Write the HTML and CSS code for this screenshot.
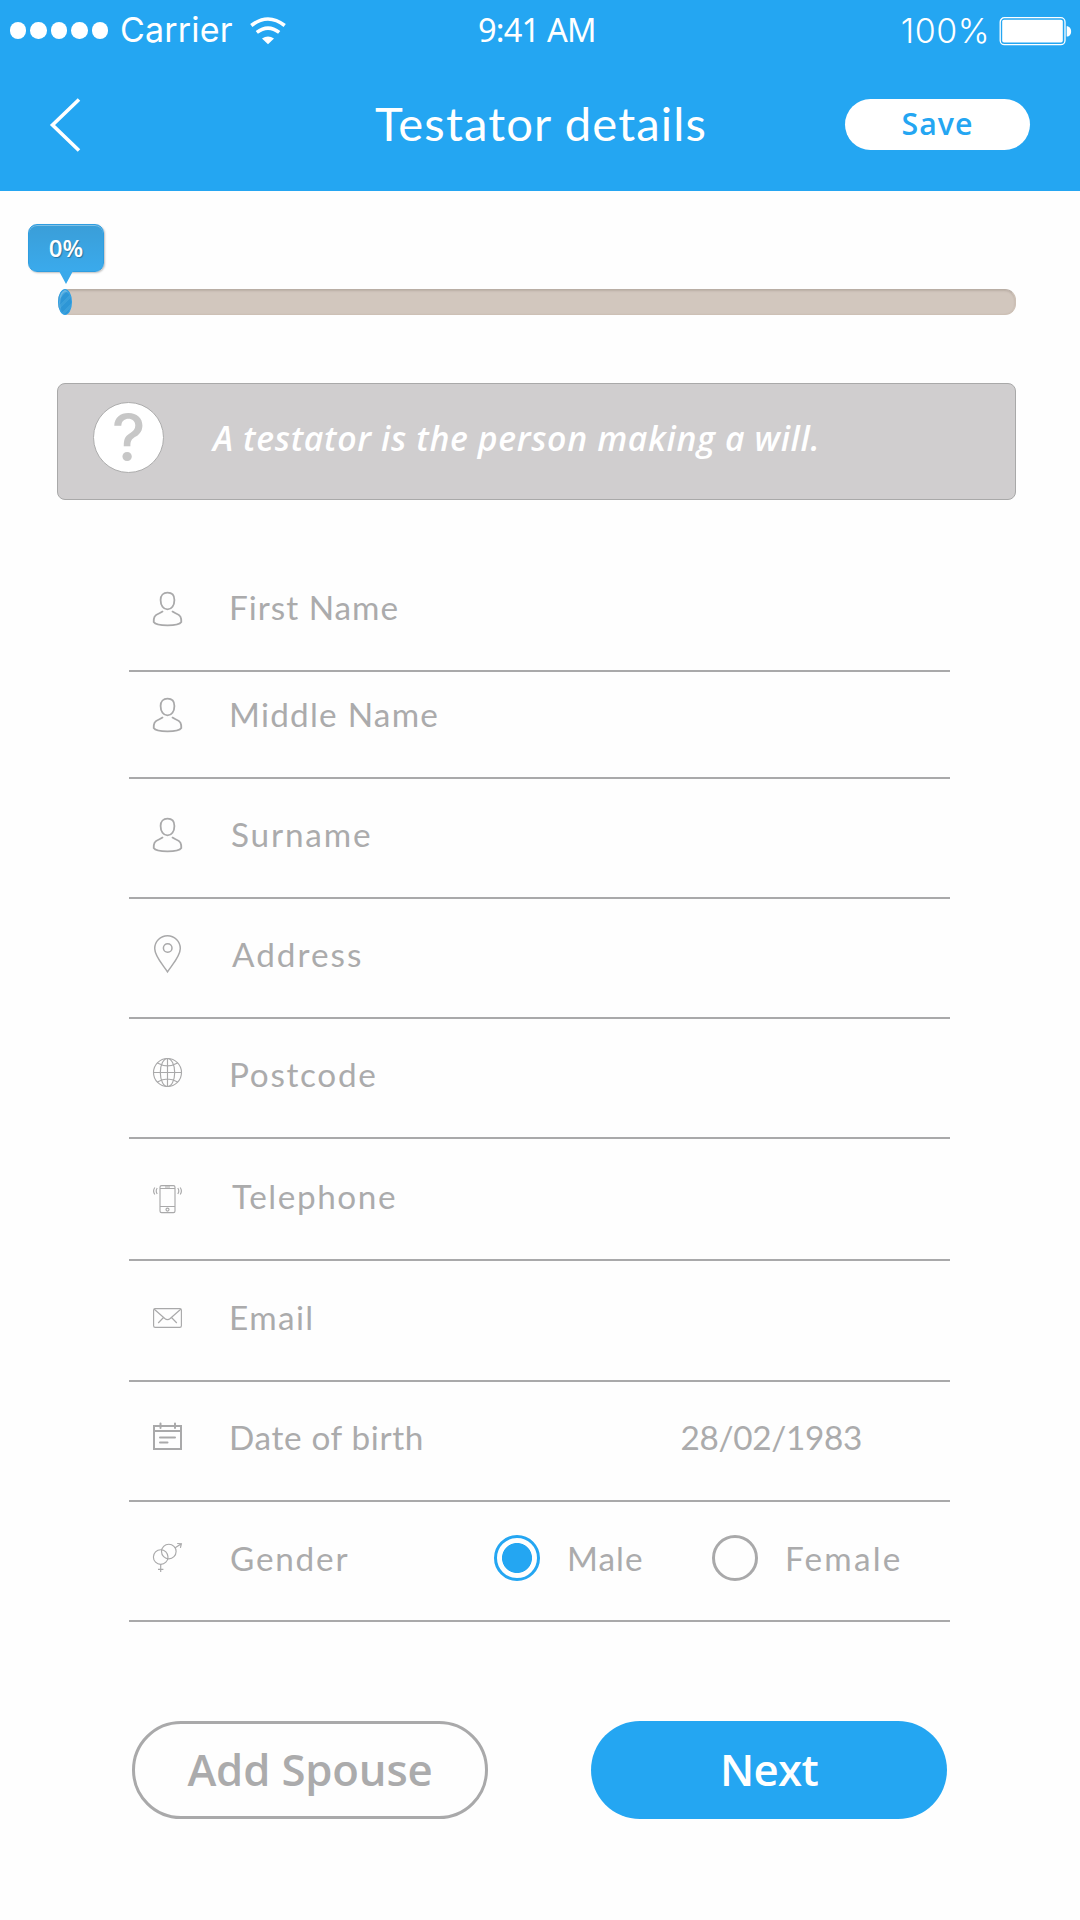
FILE: index.html
```html
<!DOCTYPE html>
<html lang="en">
<head>
<meta charset="utf-8">
<title>Testator details</title>
<link rel="stylesheet" href="styles.css">
</head>
<body>
<svg class="defs" aria-hidden="true">
  <symbol id="person" viewBox="0 0 32 40">
    <path d="M15.500 4.700C19.600 4.700 22.400 7.300 22.400 12C22.400 17.600 19.600 21.400 15.500 21.400C11.400 21.400 8.600 17.600 8.600 12C8.600 7.300 11.400 4.700 15.500 4.700Z"/>
    <path d="M11 23.2C9 25.2 4.2 25.8 2.6 28.6C1.8 30.2 1.6 32 1.7 34C4.5 38.4 26.5 38.4 29.3 34C29.4 32 29.200 30.200 28.400 28.600C26.800 25.800 22 25.200 20 23.200"/>
  </symbol>
</svg>
<header class="header">
  <div class="status">
    <div class="carrier">
      <span class="dots"><i></i><i></i><i></i><i></i><i></i></span>
      <span class="carrier-name">Carrier</span>
      <svg class="wifi" width="36" height="28" viewBox="0 0 36 28"><path d="M1.300 8.500Q18 -4.500 34.700 8.500M6.800 15.400Q18 6.700 29.200 15.400" fill="none" stroke="#fff" stroke-width="3.600"/><path d="M12 21.400Q18 17.400 24 21.400L18 27.300Z" fill="#fff"/></svg>
    </div>
    <div class="clock">9:41 AM</div>
    <div class="power">
      <span class="percent">100%</span>
      <svg class="battery" width="73" height="30" viewBox="0 0 73 30"><rect x="1.200" y="1.700" width="64.800" height="27" rx="4.200" fill="none" stroke="#fff" stroke-width="1.300"/><rect x="3.200" y="3.800" width="60.600" height="22.800" rx="1.800" fill="#fff"/><path d="M67.700 10.300C73.600 10.300 73.600 20.600 67.700 20.600Z" fill="#fff"/></svg>
    </div>
  </div>
  <div class="nav">
    <svg class="back" width="32" height="54" viewBox="0 0 32 54"><path d="M30 1.500L3.500 27L30 52.500" fill="none" stroke="#fff" stroke-width="3.600"/></svg>
    <h1 class="title">Testator details</h1>
    <button class="save">Save</button>
  </div>
</header>
<main class="main">
  <section class="progress">
    <div class="bubble">0%</div>
    <div class="track"><div class="fill"></div></div>
  </section>
  <section class="info">
    <span class="help">?</span>
    <p class="info-text">A testator is the person making a will.</p>
  </section>
  <form class="form">
    <div class="row row-first"><svg class="icon drop"><use href="#person"/></svg><label class="label first">First Name</label></div>
    <div class="row row-middle"><svg class="icon"><use href="#person"/></svg><label class="label middle">Middle Name</label></div>
    <div class="row"><svg class="icon"><use href="#person"/></svg><label class="label surname">Surname</label></div>
    <div class="row"><svg class="icon thin" viewBox="0 0 32 40"><path d="M15.500 37.900C11.500 31.500 2.700 22.500 2.700 14.500A12.800 12.800 0 0 1 28.300 14.500C28.300 22.500 19.500 31.500 15.500 37.900Z"/><circle cx="15.700" cy="14" r="4.300"/></svg><label class="label address">Address</label></div>
    <div class="row"><svg class="icon fine" viewBox="0 0 32 40"><circle cx="15.500" cy="18.500" r="14"/><ellipse cx="15.500" cy="18.500" rx="7.200" ry="14"/><path d="M15.500 4.500V32.500M1.500 18.500H29.500M5.400 9Q15.500 14.600 25.600 9M5.400 28Q15.500 22 25.600 28"/></svg><label class="label postcode">Postcode</label></div>
    <div class="row row-tel"><svg class="icon fine" viewBox="0 0 32 40"><rect x="8" y="9.600" width="15" height="27" rx="1.600"/><path d="M8 12.500H23M8 30.500H23M13 11H18M5.200 12Q3.200 15 5.200 18M2.800 11.500Q.4 15 2.800 18.500M25.800 12Q27.800 15 25.800 18M28.200 11.500Q30.600 15 28.200 18.500" /><circle cx="15.500" cy="33.600" r="1.500"/></svg><label class="label telephone">Telephone</label></div>
    <div class="row row-email"><svg class="icon fine" viewBox="0 0 32 40"><rect x="1.600" y="11.600" width="27.800" height="18.800" rx="1.600"/><path d="M2 12L12.800 21.500Q15.500 23.700 18.200 21.500L29 12M11.500 20.500L6.200 26M19.500 20.500L24.800 26"/></svg><label class="label email">Email</label></div>
    <div class="row"><svg class="icon bold" viewBox="0 0 32 40"><path d="M2 9H29V32H2ZM2 14H29M8.500 6.500V11M23 6.500V11M8 20.500H23M8 25.500H15.500" stroke-linecap="round"/></svg><label class="label birth">Date of birth</label><span class="date">28/02/1983</span></div>
    <div class="row"><svg class="icon fine" viewBox="0 0 32 40"><circle cx="8.700" cy="20" r="7.300"/><circle cx="16.800" cy="14.500" r="7.300"/><path d="M8.700 27.300V35M6 32.400H11.400M23.200 10.700L29 7M25.200 6.500L29.400 6.700L28.400 10.800"/></svg><label class="label gender">Gender</label>
      <div class="options">
        <label class="option"><span class="radio on"></span><span class="option-text male">Male</span></label>
        <label class="option"><span class="radio"></span><span class="option-text female">Female</span></label>
      </div>
    </div>
  </form>
  <div class="actions">
    <button class="btn outline">Add Spouse</button>
    <button class="btn solid">Next</button>
  </div>
</main>
</body>
</html>
```
FILE: styles.css
```css
* { box-sizing: border-box; }
body { margin: 0; width: 1080px; height: 1920px; overflow: hidden; background: #fefefe; font-family: Lato, sans-serif; color: #ababac; }
button { border: 0; margin: 0; padding: 0; font-family: "Open Sans", sans-serif; }
.defs { position: absolute; width: 0; height: 0; }

.header { height: 191px; background: #24a6f2; color: #fff; }
.status { display: grid; grid-template-columns: 468px 1fr auto; align-items: center; height: 61px; padding: 0 8px 0 10px; }
.carrier { display: flex; align-items: center; font: 400 34px/60px Inter, sans-serif; }
.dots { display: flex; gap: 4px; margin-right: 12px; }
.dots i { width: 16.400px; height: 16.400px; border-radius: 50%; background: #fff; }
.carrier-name { margin-top: -1px; letter-spacing: .2px; }
.wifi { margin-left: 17px; }
.clock { font: 400 32.600px/60px "Noto Sans", sans-serif; letter-spacing: -.8px; margin-top: -1px; }
.power { display: flex; align-items: center; gap: 9px; }
.percent { font: 300 34px/60px Inter, sans-serif; letter-spacing: .5px; }
.nav { display: grid; grid-template-columns: 326px 1fr auto; align-items: center; height: 127px; padding: 0 50px 0 49px; }
.title { margin: 0 0 3px; font-size: 47.200px; font-weight: 400; line-height: 60px; letter-spacing: 1.150px; white-space: nowrap; }
.save { width: 185px; height: 51px; padding-bottom: 2px; border-radius: 26px; background: #fff; color: #24a6f2; font-size: 30.300px; line-height: 44px; font-weight: 600; letter-spacing: 1px; }

.main { padding-top: 33px; }
.progress { height: 92px; }
.bubble { position: relative; width: 76px; height: 48px; margin-left: 28px; border: 1px solid #2f9de0; border-radius: 9px; background: linear-gradient(#3a9ed8, #3aaaec); box-shadow: 1px 1px 2px rgba(0, 0, 0, .25), inset 0 1px 0 rgba(255, 255, 255, .35); color: #fff; font: 600 24px/45px "Open Sans", sans-serif; text-align: center; text-shadow: 1px 1px 1px rgba(0, 0, 0, .3); }
.bubble::after { content: ""; position: absolute; left: 30px; top: 46px; border: 7px solid transparent; border-top: 13px solid #39a9eb; border-bottom: 0; }
.track { width: 958px; height: 26px; margin: 17px 0 0 58px; border: 1px solid #cdc0b5; border-top-color: #b9aea5; border-radius: 11px; background: #d2c7be; box-shadow: inset 0 1px 2px rgba(90, 75, 65, .2); }
.fill { width: 14px; height: 26px; margin: -1px 0 0 -1px; border: 1px solid #2b9fe6; border-radius: 50%; background: repeating-linear-gradient(135deg, #2d96d6 0 4px, #3a9fda 4px 7px); box-shadow: inset 1px 2px 1px rgba(255, 255, 255, .25); }

.info { display: flex; align-items: center; width: 959px; height: 117px; margin: 67px 0 0 57px; padding: 0 0 8px 35px; border: 1px solid #a9a9a9; border-radius: 8px; background: #d0cecf; color: #fff; }
.help { width: 71px; height: 71px; border: 1px solid #adadad; border-radius: 50%; background: #fff; color: #c7c7c7; font: 500 64px/69px Inter, sans-serif; text-align: center; }
.info-text { margin: 0 0 0 49px; font: italic 600 33.800px/40px "Open Sans", sans-serif; letter-spacing: .630px; white-space: nowrap; }

.form { width: 821px; margin: 65px 0 0 129px; font-size: 33.300px; line-height: 40px; }
.row { display: flex; align-items: flex-end; height: 120px; padding: 0 0 43px 23px; border-bottom: 2px solid #a9a9aa; }
.row-first, .row-middle { height: 107px; }
.row-tel { height: 122px; }
.row-email { height: 121px; }
.icon { width: 32px; height: 40px; margin-right: 45px; fill: none; stroke: #a9a9aa; stroke-width: 1.800; }
.drop { margin-bottom: -1px; }
.thin { stroke-width: 1.500; }
.fine { stroke-width: 1.150; }
.bold { stroke-width: 2; }
.label { white-space: nowrap; }
.first { letter-spacing: 1px; }
.middle { letter-spacing: 1.250px; }
.surname { letter-spacing: 1.830px; margin-left: 2px; }
.address { letter-spacing: 2px; margin-left: 3px; }
.postcode { letter-spacing: 1.700px; }
.telephone { letter-spacing: 1.570px; margin-left: 3px; }
.email { letter-spacing: 1.400px; }
.birth { letter-spacing: .650px; }
.gender { letter-spacing: 1.780px; margin: 0 0 -1px 1px; }
.date { margin: 0 88px 0 auto; letter-spacing: -.300px; }
.options { display: flex; width: 456px; margin: 0 0 -4px auto; }
.option { display: flex; align-items: center; gap: 27px; width: 218px; height: 46px; }
.option-text { padding-bottom: 1px; }
.radio { flex: none; width: 46px; height: 46px; border: 3px solid #a9a9aa; border-radius: 50%; }
.radio.on { border-color: #24a6f2; background: radial-gradient(circle, #24a6f2 14.600px, transparent 15.400px); }
.male { letter-spacing: 1.040px; }
.female { letter-spacing: 2.200px; }

.actions { display: flex; gap: 103px; margin: 99px 0 0 132px; }
.btn { width: 356px; height: 98px; padding-bottom: 3px; border-radius: 49px; font-size: 43.700px; line-height: 60px; font-weight: 600; }
.outline { border: 3px solid #a9a9aa; background: none; color: #ababac; letter-spacing: -.150px; }
.solid { background: #24a6f2; color: #fff; letter-spacing: -.700px; }
```
